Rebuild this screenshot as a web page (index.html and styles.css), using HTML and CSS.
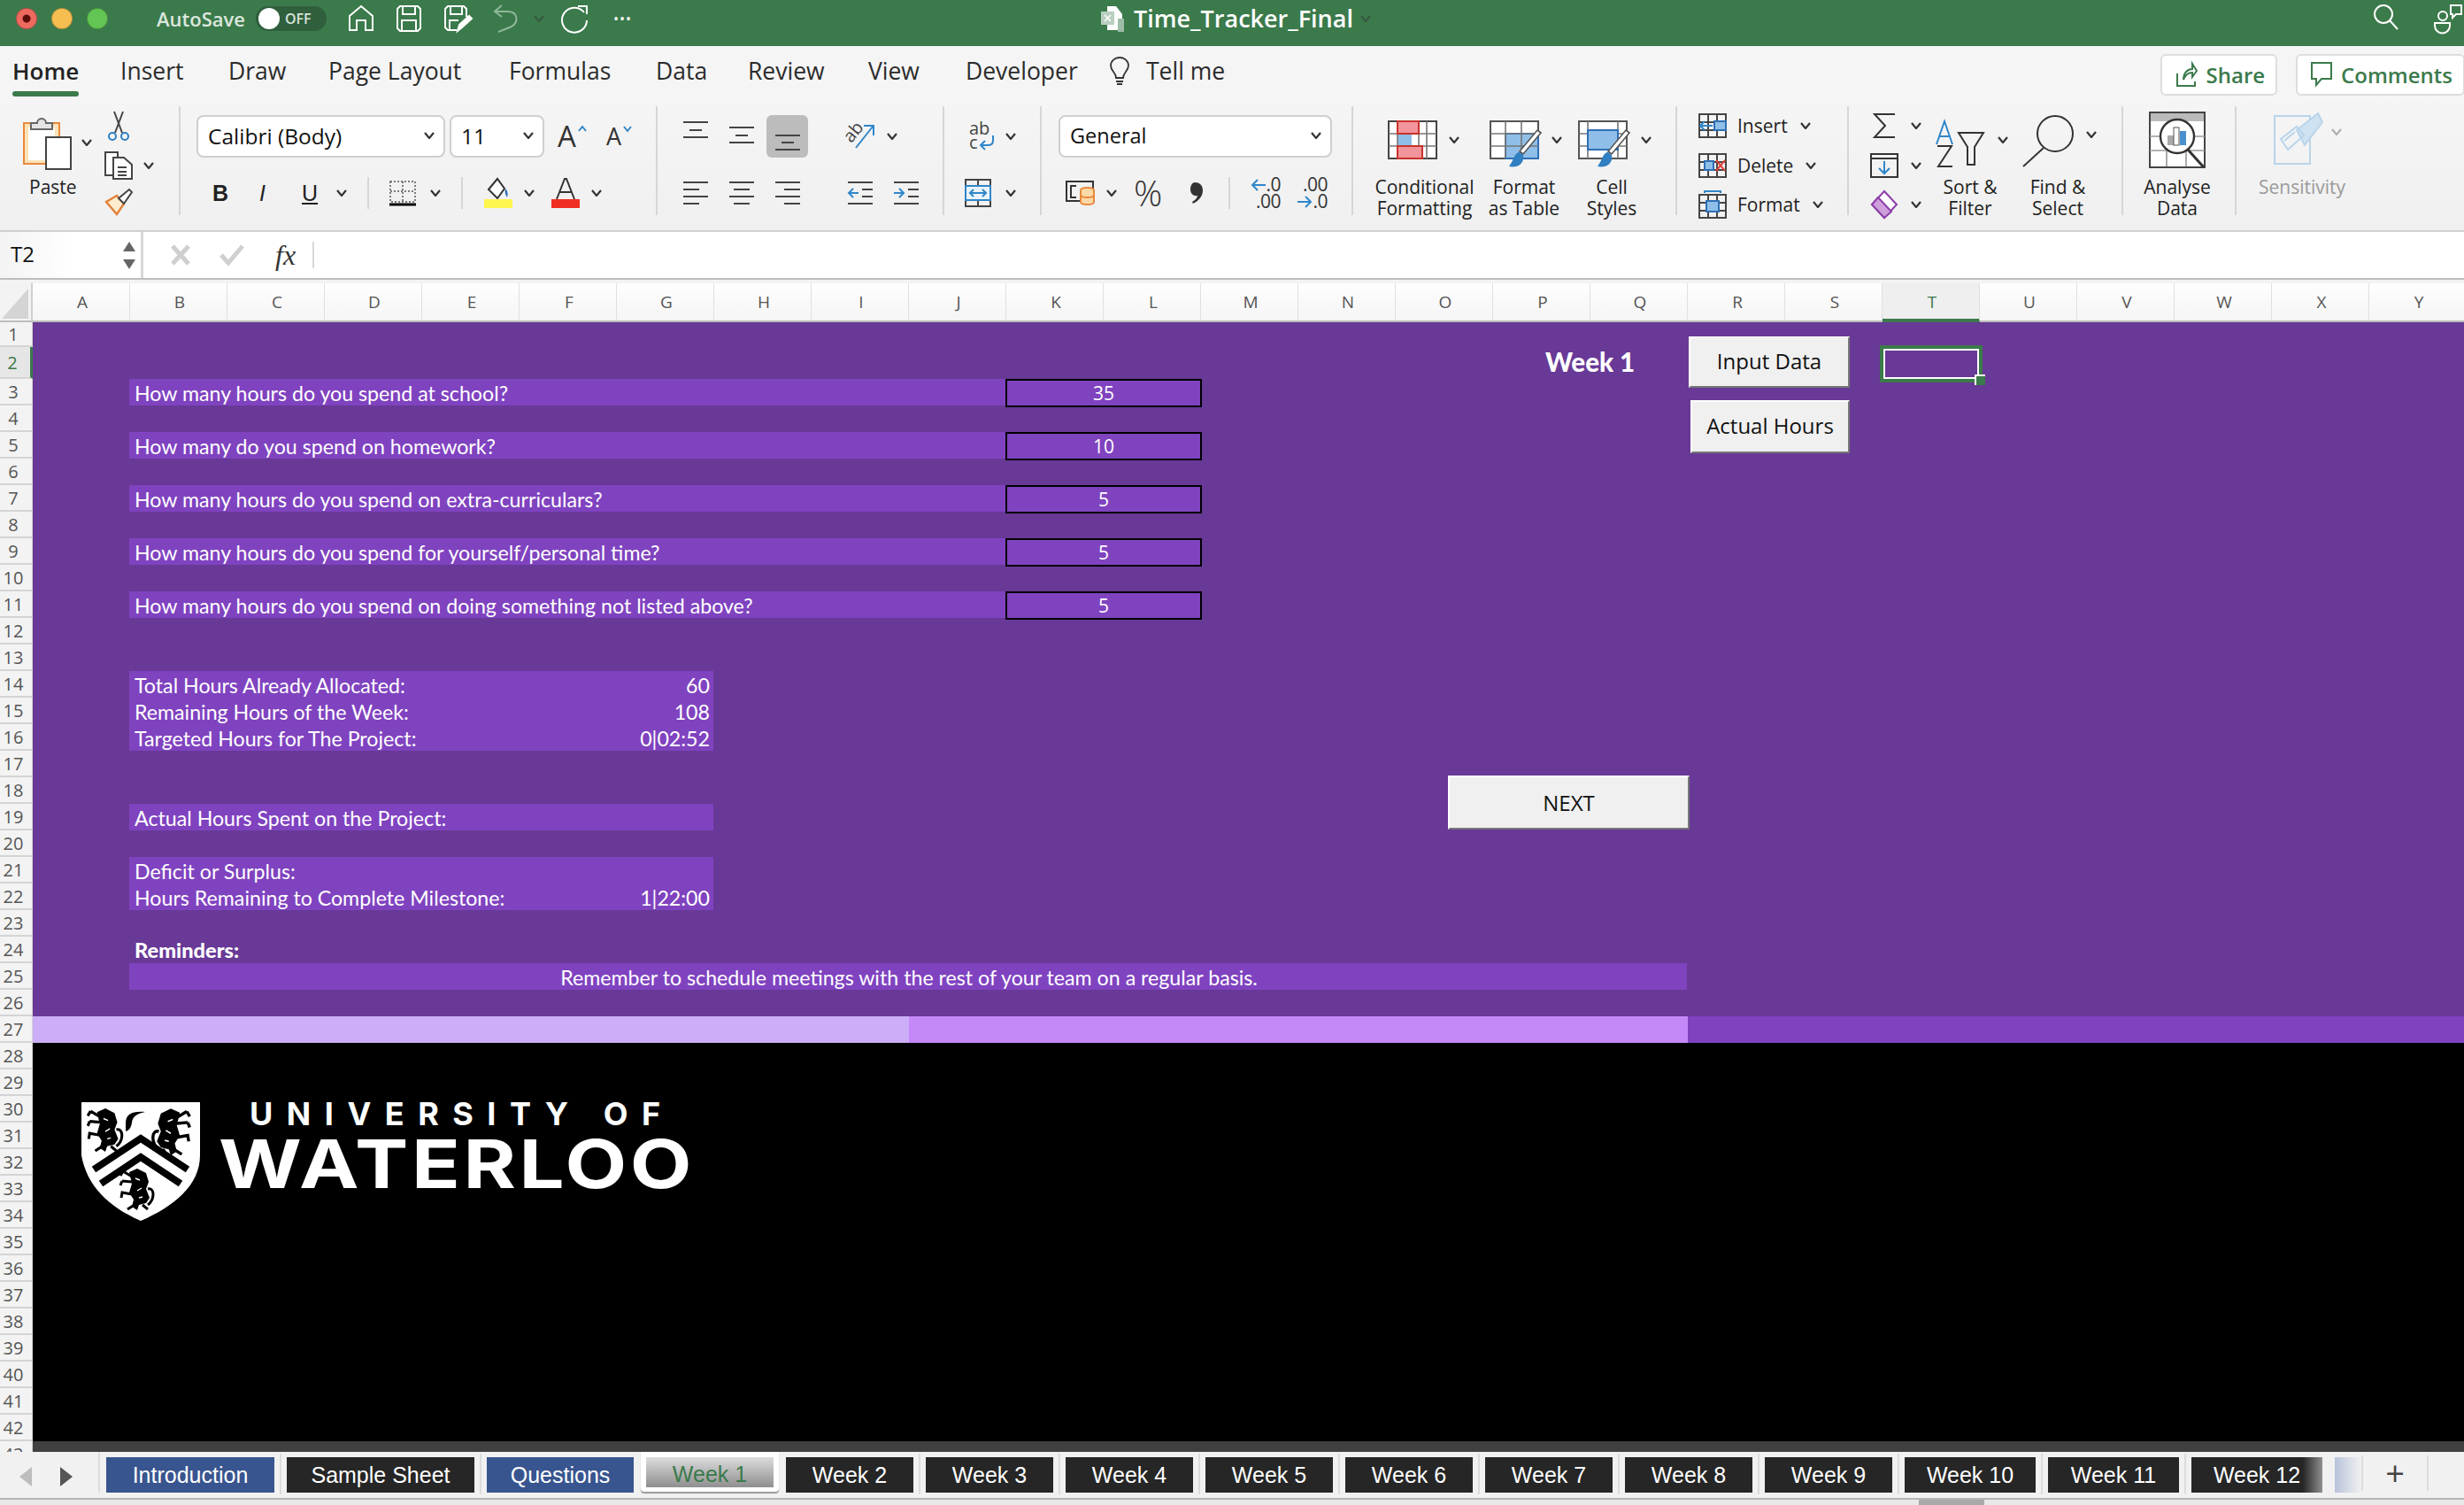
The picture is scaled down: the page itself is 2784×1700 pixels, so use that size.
FILE: index.html
```html
<!DOCTYPE html>
<html lang="en">
<head>
<meta charset="UTF-8">
<title>Time_Tracker_Final</title>
<link rel="stylesheet" href="styles.css">
</head>
<body>
<svg class="defs" width="0" height="0">
  <symbol id="chev" viewBox="0 0 12 8"><path d="M1 1l5 6 5-6" fill="none" stroke="#333" stroke-width="2.2"/></symbol>
  <symbol id="lion" viewBox="0 0 40 48">
    <path d="M11 5l9-4 10 5 3 10-3 8 4 10-4 6-8 2-2 6-6-4 2-8-5-8 3-10z" fill="#000"/>
    <path d="M14 10L4 4M4 4L1 9M14 16L3 15M3 15l-2 5M14 30L3 28l-1 6M20 40L9 47M26 42l6 5M32 24c8-2 8 12 0 18" fill="none" stroke="#000" stroke-width="3"/>
    <path d="M18 12l5 2M20 26l5-3M22 34l4-1" fill="none" stroke="#fff" stroke-width="1.4"/>
  </symbol>
</svg>

<header class="titlebar">
  <div class="lights"><i class="light red"></i><i class="light amber"></i><i class="light lime"></i></div>
  <span class="autosave">AutoSave</span>
  <span class="toggle"><i></i>OFF</span>
  <svg class="qa home" width="28" height="30" viewBox="0 0 28 30" fill="none" stroke="#fff" stroke-width="2"><path d="M1 28V12L14 1l13 11v16h-8V17H9v11z"/></svg>
  <svg class="qa save" width="28" height="30" viewBox="0 0 28 30" fill="none" stroke="#fff" stroke-width="2"><path d="M4 1h20l3 3v22l-3 3H4l-3-3V4z"/><path d="M7 1v9h14V1M6 29V17h16v12"/></svg>
  <svg class="qa saveas" width="32" height="30" viewBox="0 0 32 30" fill="none" stroke="#fff" stroke-width="2"><path d="M14 28H4l-3-3V4l3-3h18l3 3v9"/><path d="M7 1v9h13V1M6 28V17h10"/><path d="M15 29l2-7 11-10 3 3-11 10z" fill="#fff"/></svg>
  <svg class="qa undo" width="28" height="32" viewBox="0 0 28 32" fill="none" stroke="#8fb79b" stroke-width="2"><path d="M10 1L2 8l8 6M2 8h14c13 0 13 12 5 17L6 31"/></svg>
  <svg class="chev chev-undo"><use href="#chev"/></svg>
  <svg class="qa redo" width="32" height="32" viewBox="0 0 32 32" fill="none" stroke="#fff" stroke-width="2"><path d="M27 9a14 14 0 1 0 3 9"/><path d="M20 2h10v9"/></svg>
  <span class="dots">•••</span>
  <div class="doc-title">
    <svg width="30" height="30" viewBox="0 0 30 30"><path d="M8 1h10l7 9v18H8z" fill="#fff"/><rect x="1" y="7" width="15" height="15" fill="#b9cfc0"/><path d="M5 11l7 7M12 11l-7 7" stroke="#fff" stroke-width="1.6"/><rect x="20" y="15" width="7" height="15" fill="#9dbda8"/></svg>
    <span>Time_Tracker_Final</span>
    <svg class="chev"><use href="#chev"/></svg>
  </div>
  <div class="title-right">
    <svg width="30" height="30" viewBox="0 0 30 30" fill="none" stroke="#fff" stroke-width="2"><circle cx="12" cy="12" r="10"/><path d="M19 19l9 10"/></svg>
    <svg width="32" height="32" viewBox="0 0 32 32" fill="none" stroke="#fff" stroke-width="2"><circle cx="10" cy="14" r="5"/><path d="M1 22h17v3a8 8 0 0 1-17 0zM19 2h12v10h-6l-4 4v-4h-2z"/></svg>
  </div>
</header>

<nav class="ribbon-tabs">
  <div class="tab-list">
    <span class="rtab current">Home</span>
    <span class="rtab">Insert</span>
    <span class="rtab">Draw</span>
    <span class="rtab">Page Layout</span>
    <span class="rtab">Formulas</span>
    <span class="rtab">Data</span>
    <span class="rtab">Review</span>
    <span class="rtab">View</span>
    <span class="rtab">Developer</span>
    <svg width="24" height="32" viewBox="0 0 24 32" fill="none" stroke="#333" stroke-width="1.8"><path d="M8 24c0-6-6-8-6-14a10 9 0 0 1 20 0c0 6-6 8-6 14zM8 28h8M9 31h6"/></svg>
    <span class="rtab">Tell me</span>
  </div>
  <div class="share-box">
    <span class="action share"><svg width="24" height="28" viewBox="0 0 24 28" fill="none" stroke="#3b7a4b" stroke-width="2"><path d="M1 13v14h20v-5M8 20c0-8 5-12 10-12V2l5 8-5 7v-5c-5 0-8 3-10 8z"/></svg>Share</span>
    <span class="action comments"><svg width="24" height="28" viewBox="0 0 24 28" fill="none" stroke="#3b7a4b" stroke-width="2"><path d="M1 1h22v18H12l-6 7v-7H1z"/></svg>Comments</span>
  </div>
</nav>

<section class="ribbon">
  <!-- clipboard -->
  <div class="grp g-clip">
    <div class="paste">
      <div class="paste-top">
        <svg width="56" height="62" viewBox="0 0 56 62"><rect x="1" y="9" width="40" height="46" fill="#fbe3b8" stroke="#e8893c" stroke-width="2"/><rect x="6" y="14" width="30" height="37" fill="#fff"/><path d="M9 16V9h7a5 5 0 0 1 10 0h7v7z" fill="#e4e4e4" stroke="#666" stroke-width="2"/><rect x="26" y="25" width="28" height="36" fill="#fff" stroke="#444" stroke-width="2"/></svg>
        <svg class="chev"><use href="#chev"/></svg>
      </div>
      <span class="lbl paste-lbl">Paste</span>
    </div>
    <div class="clip-tools">
      <svg class="cut" width="32" height="34" viewBox="0 0 32 34" fill="none" stroke-width="2"><path d="M11 1l9 24M21 1l-9 24" stroke="#444"/><circle cx="9" cy="29" r="4" stroke="#2f7fc1"/><circle cx="23" cy="29" r="4" stroke="#2f7fc1"/></svg>
      <div class="copy-row">
        <svg width="32" height="32" viewBox="0 0 32 32" fill="#fff" stroke="#444" stroke-width="2"><path d="M1 1h14v26H1z"/><path d="M10 7h12l9 8v16H10zM15 18h10M15 23h10M15 27h10"/></svg>
        <svg class="chev"><use href="#chev"/></svg>
      </div>
      <svg class="brush" width="32" height="30" viewBox="0 0 32 30"><path d="M2 15l12-7 8 9-8 12z" fill="#fdeccd" stroke="#e0823a" stroke-width="2.4"/><path d="M16 11L28 1l3 3-9 13z" fill="#fff" stroke="#444" stroke-width="2"/></svg>
    </div>
  </div>

  <!-- font -->
  <div class="grp g-font">
    <div class="row1 font-r1">
      <div class="select font-name">Calibri (Body)<svg class="chev"><use href="#chev"/></svg></div>
      <div class="select font-size">11<svg class="chev"><use href="#chev"/></svg></div>
      <span class="grow-a">A<svg class="caret" width="10" height="7" viewBox="0 0 10 7" fill="none" stroke="#2f86c9" stroke-width="2"><path d="M1 6l4-5 4 5"/></svg></span>
      <span class="grow-a small-a">A<svg class="caret" width="10" height="7" viewBox="0 0 10 7" fill="none" stroke="#2f86c9" stroke-width="2"><path d="M1 1l4 5 4-5"/></svg></span>
    </div>
    <div class="row2 font-r2">
      <b class="fmt">B</b><i class="fmt thin">I</i><u class="fmt thin">U</u>
      <svg class="chev"><use href="#chev"/></svg>
      <span class="sep"></span>
      <svg width="30" height="30" viewBox="0 0 30 30" fill="none"><path d="M1 2h28v23H1zM15 2v23M1 13h28" stroke="#555" stroke-width="1.5" stroke-dasharray="2 2"/><path d="M0 28h30" stroke="#000" stroke-width="3"/></svg>
      <svg class="chev"><use href="#chev"/></svg>
      <span class="sep"></span>
      <svg width="32" height="34" viewBox="0 0 32 34"><path d="M5 13L15 1l8 11-8 11z" fill="#fff" stroke="#333" stroke-width="2"/><path d="M24 12c3 3 3 6 2 10-2-3-3-6-2-10z" fill="#2f6fb5"/><rect y="24" width="32" height="10" fill="#fdf550"/></svg>
      <svg class="chev"><use href="#chev"/></svg>
      <svg width="32" height="34" viewBox="0 0 32 34"><path d="M6 24L15 1h2l9 23M10 16h12" fill="none" stroke="#333" stroke-width="2"/><rect y="24" width="32" height="10" fill="#ee2f22"/></svg>
      <svg class="chev"><use href="#chev"/></svg>
    </div>
  </div>

  <!-- alignment -->
  <div class="grp g-align">
    <div class="row1 align-r1">
      <svg width="28" height="48" viewBox="0 0 28 48" stroke="#444" stroke-width="2"><path d="M0 8h28M7 17h14M0 25h28"/></svg>
      <svg width="28" height="48" viewBox="0 0 28 48" stroke="#444" stroke-width="2"><path d="M0 14h28M7 23h14M0 31h28"/></svg>
      <span class="active-btn"><svg width="28" height="48" viewBox="0 0 28 48" stroke="#444" stroke-width="2"><path d="M0 23h28M7 31h14M0 39h28"/></svg></span>
      <svg width="36" height="32" viewBox="0 0 36 32" fill="none"><text x="0" y="18" transform="rotate(-50 10 14)" class="ab-text">ab</text><path d="M12 29L31 5M21 4h11v11" stroke="#2f86c9" stroke-width="2"/></svg>
      <svg class="chev"><use href="#chev"/></svg>
    </div>
    <div class="row2 align-r2">
      <svg width="28" height="27" viewBox="0 0 28 27" stroke="#444" stroke-width="2"><path d="M0 1h28M0 9h18M0 17h28M0 25h18"/></svg>
      <svg width="28" height="27" viewBox="0 0 28 27" stroke="#444" stroke-width="2"><path d="M0 1h28M5 9h18M0 17h28M5 25h18"/></svg>
      <svg width="28" height="27" viewBox="0 0 28 27" stroke="#444" stroke-width="2"><path d="M0 1h28M10 9h18M0 17h28M10 25h18"/></svg>
      <svg width="28" height="27" viewBox="0 0 28 27" fill="none" stroke-width="2"><path d="M0 1h28M16 9h12M16 17h12M0 25h28" stroke="#444"/><path d="M12 13H1M6 8l-5 5 5 5" stroke="#2f86c9"/></svg>
      <svg width="28" height="27" viewBox="0 0 28 27" fill="none" stroke-width="2"><path d="M0 1h28M16 9h12M16 17h12M0 25h28" stroke="#444"/><path d="M0 13h11M6 8l5 5-5 5" stroke="#2f86c9"/></svg>
    </div>
  </div>

  <!-- wrap and merge -->
  <div class="grp g-wrap">
    <div class="row1 wrap-r1">
      <svg width="33" height="34" viewBox="0 0 33 34" fill="none"><text x="5" y="15" class="ab-text">ab</text><text x="5" y="31" class="ab-text">c</text><path d="M32 16v6c0 4-3 5-6 5h-8M23 22l-5 5 5 5" stroke="#2f86c9" stroke-width="2"/></svg>
      <svg class="chev"><use href="#chev"/></svg>
    </div>
    <div class="row2 wrap-r2">
      <svg width="30" height="32" viewBox="0 0 30 32" fill="none" stroke-width="2"><path d="M1 1h28v30H1zM15 1v7M15 24v7" stroke="#444"/><path d="M1 8h28v16H1z" stroke="#2f86c9" fill="#eaf3fb"/><path d="M6 16h18M10 12l-4 4 4 4M20 12l4 4-4 4" stroke="#2f86c9"/></svg>
      <svg class="chev"><use href="#chev"/></svg>
    </div>
  </div>

  <!-- number -->
  <div class="grp g-num">
    <div class="row1 num-r1">
      <div class="select num-format">General<svg class="chev"><use href="#chev"/></svg></div>
    </div>
    <div class="row2 num-r2">
      <svg width="34" height="28" viewBox="0 0 34 28" fill="none"><rect x="1" y="1" width="30" height="22" stroke="#333" stroke-width="2"/><path d="M12 6H6v13h6" stroke="#333" stroke-width="2"/><path d="M17 11v13c0 4 15 4 15 0V11c0-4-15-4-15 0z" fill="#fbd9a8" stroke="#e8893c" stroke-width="2"/><path d="M17 16c0 4 15 4 15 0" stroke="#e8893c" stroke-width="2"/></svg>
      <svg class="chev"><use href="#chev"/></svg>
      <span class="pct">%</span>
      <svg width="18" height="26" viewBox="0 0 18 26" fill="#333"><path d="M8 1c5 0 9 3 9 9 0 7-5 12-11 15l-1-2c4-2 6-5 6-7-4 1-8-2-8-7 0-4 2-8 5-8z"/></svg>
      <span class="sep"></span>
      <span class="dec"><span class="dec-line"><svg width="17" height="14" viewBox="0 0 17 14" fill="none" stroke="#2f86c9" stroke-width="2"><path d="M17 7H2M8 1L2 7l6 6"/></svg>.0</span><span class="dec-line">.00</span></span>
      <span class="dec"><span class="dec-line">.00</span><span class="dec-line"><svg width="17" height="14" viewBox="0 0 17 14" fill="none" stroke="#2f86c9" stroke-width="2"><path d="M0 7h15M9 1l6 6-6 6"/></svg>.0</span></span>
    </div>
  </div>

  <!-- styles -->
  <div class="grp g-styles">
    <div class="big big-cf">
      <div class="big-top">
        <svg width="56" height="44" viewBox="0 0 56 44"><path d="M1 1h54v42H1z" fill="#fff" stroke="#444" stroke-width="2"/><rect x="11" y="15" width="16" height="14" fill="#8fbfe8"/><path d="M1 15h54M1 29h54M44 1v42M11 1v42M35 1v42" stroke="#777" stroke-width="1.6" fill="none"/><rect x="11" y="1" width="24" height="14" fill="#f2949b" stroke="#c9332b" stroke-width="2"/><rect x="11" y="29" width="28" height="14" fill="#f2949b" stroke="#c9332b" stroke-width="2"/></svg>
        <svg class="chev big-chev"><use href="#chev"/></svg>
      </div>
      <span class="lbl">Conditional<br>Formatting</span>
    </div>
    <div class="big big-ft">
      <div class="big-top">
        <svg width="60" height="54" viewBox="0 0 60 54"><path d="M1 1h54v42H1z" fill="#fff" stroke="#555" stroke-width="2"/><rect x="18" y="15" width="37" height="28" fill="#8fbfe8" stroke="#2f6fb5" stroke-width="2"/><path d="M1 15h54M1 29h54M18 1v42M36 1v42" stroke="#777" stroke-width="1.6" fill="none"/><path d="M58 14L38 38l-4-3L54 11z" fill="#fff" stroke="#555" stroke-width="1.6"/><path d="M34 36c-6 0-6 8-12 16 8 2 18-2 16-13z" fill="#2f7fc1"/></svg>
        <svg class="chev big-chev"><use href="#chev"/></svg>
      </div>
      <span class="lbl">Format<br>as Table</span>
    </div>
    <div class="big big-cs">
      <div class="big-top">
        <svg width="60" height="54" viewBox="0 0 60 54"><path d="M1 1h54v42H1z" fill="#fff" stroke="#555" stroke-width="2"/><path d="M1 15h54M1 29h54M11 1v42M45 1v42" stroke="#777" stroke-width="1.6" fill="none"/><rect x="11" y="11" width="34" height="22" fill="#8fbfe8" stroke="#2f6fb5" stroke-width="2"/><path d="M58 14L38 38l-4-3L54 11z" fill="#fff" stroke="#555" stroke-width="1.6"/><path d="M34 36c-6 0-6 8-12 16 8 2 18-2 16-13z" fill="#2f7fc1"/></svg>
        <svg class="chev big-chev"><use href="#chev"/></svg>
      </div>
      <span class="lbl">Cell<br>Styles</span>
    </div>
  </div>

  <!-- cells -->
  <div class="grp g-cells">
    <div class="cell-row">
      <svg width="32" height="28" viewBox="0 0 32 28" fill="none" stroke-width="2"><path d="M1 1h30v26H1zM1 10h30M1 19h30M11 1v26M21 1v26" stroke="#444"/><rect x="18" y="9" width="13" height="10" fill="#8fbfe8" stroke="#2f6fb5"/><path d="M16 14H2M7 9l-5 5 5 5" stroke="#2f86c9"/></svg>
      <span class="lbl">Insert</span><svg class="chev"><use href="#chev"/></svg>
    </div>
    <div class="cell-row">
      <svg width="32" height="28" viewBox="0 0 32 28" fill="none" stroke-width="2"><path d="M1 1h30v26H1zM1 10h30M1 19h30M11 1v26M21 1v26" stroke="#444"/><rect x="7" y="9" width="10" height="10" fill="#8fbfe8" stroke="#2f6fb5"/><path d="M20 8l10 12M30 8L20 20" stroke="#e0443a"/></svg>
      <span class="lbl">Delete</span><svg class="chev"><use href="#chev"/></svg>
    </div>
    <div class="cell-row">
      <svg width="32" height="32" viewBox="0 0 32 32" fill="none" stroke-width="2"><path d="M1 5h30v26H1zM1 14h30M1 23h30M11 5v26M21 5v26" stroke="#444"/><rect x="9" y="12" width="14" height="12" fill="#8fbfe8" stroke="#2f6fb5"/><path d="M7 1h18M7 0v3M25 0v3" stroke="#2f86c9"/></svg>
      <span class="lbl">Format</span><svg class="chev"><use href="#chev"/></svg>
    </div>
  </div>

  <!-- editing -->
  <div class="grp g-edit">
    <div class="edit-col">
      <div class="cell-row">
        <svg width="32" height="28" viewBox="0 0 32 28" fill="none" stroke="#333" stroke-width="2"><path d="M28 1H5l12 13L5 27h23"/></svg>
        <svg class="chev"><use href="#chev"/></svg>
      </div>
      <div class="cell-row">
        <svg width="32" height="28" viewBox="0 0 32 28" fill="none" stroke-width="2"><path d="M1 1h30v26H1zM1 6h30" stroke="#333"/><path d="M16 9v14M10 17l6 6 6-6" stroke="#2f86c9"/></svg>
        <svg class="chev"><use href="#chev"/></svg>
      </div>
      <div class="cell-row">
        <svg width="32" height="32" viewBox="0 0 32 32"><path d="M16 1l14 15-14 15L2 16z" fill="#fff" stroke="#8c3fa8" stroke-width="2"/><path d="M2 16l7-8 15 16-8 7z" fill="#cf9fdc" stroke="#8c3fa8" stroke-width="2"/></svg>
        <svg class="chev"><use href="#chev"/></svg>
      </div>
    </div>
    <div class="big big-sort">
      <div class="big-top">
        <svg width="56" height="54" viewBox="0 0 56 54" fill="none" stroke-width="2"><path d="M1 27L10 1l9 26M4 18h12" stroke="#2f86c9"/><path d="M2 29h16L3 52h16" stroke="#333"/><path d="M26 14h28L44 30v20h-8V30z" stroke="#333"/></svg>
        <svg class="chev big-chev"><use href="#chev"/></svg>
      </div>
      <span class="lbl">Sort &amp;<br>Filter</span>
    </div>
    <div class="big big-find">
      <div class="big-top">
        <svg width="58" height="58" viewBox="0 0 58 58" fill="none" stroke="#333" stroke-width="2"><circle cx="37" cy="21" r="20"/><path d="M24 37L1 58"/></svg>
        <svg class="chev big-chev"><use href="#chev"/></svg>
      </div>
      <span class="lbl">Find &amp;<br>Select</span>
    </div>
  </div>

  <!-- analyse -->
  <div class="grp g-analyse">
    <svg width="64" height="64" viewBox="0 0 64 64" fill="none"><rect x="1" y="1" width="62" height="62" fill="#fff" stroke="#444" stroke-width="2"/><rect x="2" y="2" width="60" height="9" fill="#bbb"/><path d="M1 28h62M1 44h62M20 44v18M42 44v18" stroke="#999" stroke-width="1.6"/><circle cx="32" cy="28" r="19" fill="#fff" stroke="#333" stroke-width="2.4"/><rect x="21" y="27" width="7" height="11" fill="#aaa"/><rect x="28" y="18" width="6" height="20" fill="#fff" stroke="#555"/><rect x="35" y="22" width="7" height="16" fill="#4a90d0"/><path d="M44 43l18 20" stroke="#333" stroke-width="3"/></svg>
    <span class="lbl">Analyse<br>Data</span>
  </div>

  <!-- sensitivity -->
  <div class="grp g-sens">
    <div class="big-top">
      <svg width="56" height="60" viewBox="0 0 56 60" fill="none" stroke="#b9d4ea" stroke-width="2"><path d="M1 4h40v54H1z"/><path d="M26 20L50 1l5 10-20 26z" fill="#cfe2f2"/><path d="M8 30l18-14 8 10-18 16zM12 32l12-10" /></svg>
      <svg class="chev big-chev dim"><use href="#chev"/></svg>
    </div>
    <span class="lbl sens-lbl">Sensitivity</span>
  </div>
</section>

<div class="formula-bar">
  <div class="name-box"><span class="cell-ref">T2</span><span class="spin"><i class="up"></i><i class="down"></i></span></div>
  <div class="fx-tools">
    <svg width="22" height="24" viewBox="0 0 22 24" stroke="#cfcfcf" stroke-width="5"><path d="M2 2l18 20M20 2L2 22"/></svg>
    <svg width="28" height="24" viewBox="0 0 28 24" fill="none" stroke="#cfcfcf" stroke-width="5"><path d="M2 12l8 9L26 2"/></svg>
    <span class="fx">fx</span>
    <span class="fx-sep"></span>
  </div>
</div>

<div class="col-head">
  <div class="corner"><i></i></div>
  <span>A</span><span>B</span><span>C</span><span>D</span><span>E</span><span>F</span><span>G</span><span>H</span><span>I</span><span>J</span><span>K</span><span>L</span><span>M</span><span>N</span><span>O</span><span>P</span><span>Q</span><span>R</span><span>S</span><span class="on">T</span><span>U</span><span>V</span><span>W</span><span>X</span><span>Y</span>
</div>

<div class="workarea">
  <div class="row-head">
    <span class="h28">1</span><span class="h36 on">2</span>
    <span>3</span><span>4</span><span>5</span><span>6</span><span>7</span><span>8</span><span>9</span><span>10</span>
    <span>11</span><span>12</span><span>13</span><span>14</span><span>15</span><span>16</span><span>17</span><span>18</span><span>19</span><span>20</span>
    <span>21</span><span>22</span><span>23</span><span>24</span><span>25</span><span>26</span><span>27</span><span>28</span><span>29</span><span>30</span>
    <span>31</span><span>32</span><span>33</span><span>34</span><span>35</span><span>36</span><span>37</span><span>38</span><span>39</span><span>40</span>
    <span>41</span><span>42</span><span>43</span>
  </div>
  <div class="sheet-col">
    <div class="sheet">
      <div class="bar q r3">How many hours do you spend at school?</div>
      <div class="input r3">35</div>
      <div class="bar q r5">How many do you spend on homework?</div>
      <div class="input r5">10</div>
      <div class="bar q r7">How many hours do you spend on extra-curriculars?</div>
      <div class="input r7">5</div>
      <div class="bar q r9">How many hours do you spend for yourself/personal time?</div>
      <div class="input r9">5</div>
      <div class="bar q r11">How many hours do you spend on doing something not listed above?</div>
      <div class="input r11">5</div>

      <div class="bar sum r14"><span>Total Hours Already Allocated:</span><span>60</span></div>
      <div class="bar sum r15"><span>Remaining Hours of the Week:</span><span>108</span></div>
      <div class="bar sum r16"><span>Targeted Hours for The Project:</span><span>0|02:52</span></div>

      <div class="bar sum r19"><span>Actual Hours Spent on the Project:</span></div>
      <div class="bar sum r21"><span>Deficit or Surplus:</span></div>
      <div class="bar sum r22"><span>Hours Remaining to Complete Milestone:</span><span>1|22:00</span></div>

      <div class="reminders r24">Reminders:</div>
      <div class="bar note r25">Remember to schedule meetings with the rest of your team on a regular basis.</div>

      <div class="band band-a"></div>
      <div class="band band-b"></div>
      <div class="band band-c"></div>

      <div class="logo-area">
        <svg class="crest" width="134" height="134" viewBox="0 0 134 134">
          <path d="M0 0h134v60c0 34-30 58-67 74C30 118 6 94 0 60z" fill="#fff"/>
          <use href="#lion" x="6" y="6" width="42" height="50"/>
          <use href="#lion" x="78" y="6" width="46" height="54" transform="matrix(-1 0 0 1 202 0)"/>
          <use href="#lion" x="38" y="74" width="50" height="48"/>
          <path d="M50 24c0-10 6-14 22-13-8 2-14 4-15 12-1 7-4 9-7 10z" fill="#000"/>
          <path d="M14 76l53-35 53 35M22 92l45-30 45 30" fill="none" stroke="#000" stroke-width="8"/>
        </svg>
        <div class="wordmark">
          <span class="uni">UNIVERSITY OF</span>
          <span class="wat">WATERLOO</span>
        </div>
      </div>

      <div class="week-title">Week 1</div>
      <div class="selected"><i></i></div>
      <button class="sheet-btn btn-input">Input Data</button>
      <button class="sheet-btn btn-actual">Actual Hours</button>
      <button class="sheet-btn btn-next">NEXT</button>
    </div>
    <div class="hscroll"></div>
  </div>
</div>

<footer class="sheet-tabs">
  <div class="tab-arrows"><i class="prev"></i><i class="next"></i></div>
  <div class="tab-strip">
    <span class="stab blue t-intro">Introduction</span>
    <span class="stab dark t-sample">Sample Sheet</span>
    <span class="stab blue t-quest">Questions</span>
    <span class="stab active"><b>Week 1</b></span>
    <span class="stab dark">Week 2</span>
    <span class="stab dark">Week 3</span>
    <span class="stab dark">Week 4</span>
    <span class="stab dark">Week 5</span>
    <span class="stab dark">Week 6</span>
    <span class="stab dark">Week 7</span>
    <span class="stab dark">Week 8</span>
    <span class="stab dark">Week 9</span>
    <span class="stab dark wide">Week 10</span>
    <span class="stab dark wide">Week 11</span>
    <span class="stab dark wide fade">Week 12</span>
    <span class="stab sliver"></span>
    <span class="add-sheet">+</span>
  </div>
</footer>
<div class="bottom-strip"><i></i></div>
</body>
</html>
```

FILE: styles.css
```css
/* page */
* { box-sizing: border-box; }
html, body { margin: 0; padding: 0; }
body {
  width: 2784px;
  height: 1700px;
  overflow: hidden;
  background: #f3f3f3;
  color: #222;
  font-family: "Open Sans", "Liberation Sans", sans-serif;
}
.defs { position: absolute; }
svg { display: block; flex: none; overflow: visible; }
.chev { width: 12px; height: 8px; }
.chev.dim { opacity: .35; }

/* title bar */
.titlebar {
  position: relative;
  display: flex;
  align-items: center;
  height: 52px;
  padding-bottom: 10px;
  background: #3b7a4b;
  color: #fff;
}
.lights { display: flex; gap: 16px; margin-left: 18px; }
.light { width: 24px; height: 24px; border-radius: 50%; border: 1px solid rgba(0,0,0,.25); }
.red { background: radial-gradient(circle, #5b0d0a 0 4px, #ee6a5f 5px); }
.amber { background: #f6be50; }
.lime { background: #62c554; }
.autosave { margin-left: 55px; width: 112px; font-size: 22px; font-weight: 600; color: #dbe7de; }
.toggle {
  display: flex;
  align-items: center;
  gap: 6px;
  width: 80px;
  height: 28px;
  padding: 0 3px;
  border-radius: 14px;
  background: #2f5f3c;
  font-size: 16px;
  font-weight: 600;
  color: #d7e3da;
}
.toggle i { width: 24px; height: 24px; border-radius: 50%; background: #fff; }
.home { margin-left: 25px; }
.save { margin-left: 26px; }
.saveas { margin-left: 26px; }
.undo { margin-left: 23px; }
.chev-undo { margin-left: 18px; opacity: .45; }
.chev-undo + .redo { margin-left: 18px; }
.dots { margin-left: 28px; font-size: 16px; letter-spacing: 1px; }
.doc-title {
  position: absolute;
  left: 1243px;
  top: 6px;
  display: flex;
  align-items: center;
  gap: 8px;
  font-size: 27px;
  font-weight: 600;
  line-height: 30px;
}
.doc-title .chev { opacity: .45; }
.title-right {
  position: absolute;
  right: 2px;
  top: 4px;
  display: flex;
  gap: 39px;
}

/* ribbon tabs */
.ribbon-tabs {
  display: flex;
  align-items: center;
  justify-content: space-between;
  height: 58px;
  padding-left: 14px;
  background: #f5f5f5;
}
.tab-list {
  display: grid;
  grid-auto-flow: column;
  grid-template-columns: 122px 122px 113px 204px 166px 104px 136px 110px 162px 42px auto;
  align-items: center;
  justify-items: start;
  margin-top: -2px;
}
.rtab { position: relative; font-size: 26.5px; line-height: 40px; color: #2b2b2b; white-space: nowrap; }
.rtab.current { font-weight: 600; font-size: 26px; color: #222; }
.rtab.current::after {
  content: "";
  position: absolute;
  left: 0;
  right: 0;
  bottom: -9px;
  height: 6px;
  border-radius: 3px;
  background: #3b7a4b;
}
.share-box { display: flex; gap: 21px; margin-right: -1px; margin-top: 6px; }
.action {
  display: flex;
  align-items: center;
  gap: 10px;
  height: 47px;
  padding: 0 12px 0 16px;
  border: 2px solid #ddd;
  border-radius: 6px;
  background: #fff;
  font-size: 24px;
  font-weight: 600;
  color: #3b7a4b;
}
.action.comments { padding-left: 15px; }

/* ribbon */
.ribbon {
  display: flex;
  height: 152px;
  padding-top: 10px;
  border-bottom: 2px solid #d0d0d0;
  background: linear-gradient(#f5f5f5, #f0f0f0);
}
.grp {
  flex: none;
  height: 123px;
  border-right: 2px solid #d6d6d6;
}
.lbl { font-size: 21px; line-height: 24px; color: #222; }
.row1 { display: grid; grid-auto-flow: column; align-items: center; justify-items: start; height: 48px; margin-top: 10px; }
.row2 { display: grid; grid-auto-flow: column; align-items: center; justify-items: start; height: 44px; margin-top: 18px; }
.sep { width: 2px; height: 36px; background: #d6d6d6; }

.select {
  display: flex;
  align-items: center;
  justify-content: space-between;
  height: 48px;
  padding: 0 10px 2px 11px;
  border: 2px solid #cfcfcf;
  border-radius: 8px;
  background: #fff;
  font-size: 24.5px;
  color: #111;
}
.num-format { font-size: 23.5px; }

.g-clip { display: flex; width: 204px; padding-left: 26px; }
.paste { width: 92px; padding-top: 10px; }
.paste-top { display: flex; align-items: center; gap: 10px; height: 62px; }
.paste-lbl { display: block; margin-top: 7px; padding-left: 7px; }
.clip-tools { display: flex; flex-direction: column; gap: 12px; padding-top: 5px; }
.copy-row { display: flex; align-items: center; gap: 12px; }
.brush { margin-top: -2px; }

.g-font { width: 539px; }
.font-r1 { grid-template-columns: 286px 122px 55px auto; padding-left: 18px; }
.font-name { width: 281px; }
.font-size { width: 107px; }
.grow-a { display: flex; align-items: flex-start; font-size: 33px; line-height: 40px; color: #333; }
.caret { margin: 8px 0 0 2px; }
.small-a { font-size: 27px; }
.font-r2 { grid-template-columns: 53px 48px 39px 35px 25px 46px 35px 26px 45px 31px 45px 12px; padding-left: 36px; }
.fmt { font-family: "Liberation Sans", sans-serif; font-size: 25px; }
.fmt.thin { font-weight: 400; }

.g-align { width: 324px; }
.align-r1 { grid-template-columns: 52px 42px 89px 47px 12px; padding-left: 29px; }
.active-btn { display: block; width: 47px; height: 48px; padding-left: 10px; border-radius: 6px; background: #bcbcbc; }
.align-r2 { grid-template-columns: 52px 52px 82px 52px 28px; padding-left: 29px; }
.ab-text { font-family: "Open Sans", sans-serif; font-size: 20px; fill: #444; }

.g-wrap { width: 110px; }
.wrap-r1 { grid-template-columns: 46px 12px; padding-left: 23px; }
.wrap-r2 { grid-template-columns: 46px 12px; padding-left: 23px; }

.g-num { width: 352px; }
.num-r1 { padding-left: 19px; }
.num-format { width: 309px; }
.num-r2 { grid-template-columns: 46px 31px 61px 46px 25px 53px 34px; padding-left: 27px; }
.pct { font-size: 40px; font-weight: 300; line-height: 40px; color: #333; }
.dec { display: flex; flex-direction: column; align-items: flex-end; width: 34px; font-size: 21px; line-height: 19px; letter-spacing: -.5px; color: #333; }
.dec-line { display: flex; align-items: center; }

.g-styles { display: flex; width: 366px; padding-left: 22px; }
.big { flex: none; }
.big .lbl { display: block; text-align: center; }
.big-top { display: flex; align-items: flex-start; height: 79px; padding-top: 16px; }
.big-chev { margin-top: 18px; }
.big-cf { width: 117px; }
.big-cf .big-top { padding-left: 17px; gap: 13px; }
.big-ft { width: 108px; }
.big-ft .big-top { padding-left: 15px; gap: 10px; }
.big-cs { width: 90px; }
.big-cs .big-top { padding-left: 7px; gap: 11px; }

.g-cells { width: 194px; padding-left: 24px; }
.cell-row { display: flex; align-items: center; gap: 12px; height: 44.5px; }
.cell-row .chev { margin-left: 2px; }

.g-edit { display: flex; width: 310px; padding-left: 24px; }
.edit-col { width: 62px; }
.big-sort { width: 102px; }
.big-sort .big-top { padding-left: 12px; gap: 14px; }
.big-find { width: 96px; }
.big-find .big-top { padding: 10px 0 0 8px; gap: 14px; }

.g-analyse { display: flex; flex-direction: column; align-items: center; width: 128px; padding: 6px 4px 0 0; }
.g-analyse .lbl { margin-top: 9px; text-align: center; }

.g-sens { width: 148px; border-right: 0; }
.g-sens .big-top { padding: 7px 0 0 42px; gap: 9px; }
.sens-lbl { display: block; text-align: center; color: #9a9a9a; }

/* formula bar */
.formula-bar {
  display: flex;
  align-items: center;
  height: 52px;
  background: #fff;
}
.name-box {
  display: flex;
  align-items: center;
  justify-content: space-between;
  width: 162px;
  height: 52px;
  padding: 0 6px 0 12px;
  border-right: 3px solid #d8d8d8;
  background: linear-gradient(90deg, #f3f3f3, #fff 50%);
  font-size: 24px;
  color: #111;
}
.cell-ref { margin-top: -3px; }
.spin { display: flex; flex-direction: column; gap: 9px; }
.spin i { display: block; width: 0; height: 0; border-left: 7px solid transparent; border-right: 7px solid transparent; }
.spin .up { border-bottom: 11px solid #666; }
.spin .down { border-top: 11px solid #666; }
.fx-tools { display: grid; grid-auto-flow: column; grid-template-columns: 55px 60px 45px 2px; align-items: center; margin-left: 31px; }
.fx { padding-left: 3px; font-family: "Liberation Serif", serif; font-size: 32px; font-style: italic; line-height: 40px; color: #333; }
.fx-sep { height: 30px; background: #d8d8d8; }

/* column header */
.col-head {
  display: flex;
  height: 50px;
  padding-top: 4px;
  border-top: 2px solid #bdbdbd;
  border-bottom: 2px solid #bdbdbd;
  background: linear-gradient(#fff, #f5f5f5);
  background-clip: content-box;
}
.corner { position: relative; flex: none; width: 37px; border-right: 2px solid #cfcfcf; background: #f3f3f3; }
.corner i {
  position: absolute;
  right: 3px;
  bottom: 2px;
  border-left: 30px solid transparent;
  border-bottom: 34px solid #d4d4d4;
}
.col-head span {
  flex: none;
  width: 110px;
  padding-left: 3px;
  border-right: 1px solid #e0e0e0;
  font-size: 19px;
  line-height: 42px;
  text-align: center;
  color: #555;
}
.col-head .on { border-bottom: 4px solid #3b7a4b; background: #efefef; color: #3b7a4b; margin-bottom: -2px; }

/* sheet */
.workarea { display: flex; height: 1276px; }
.row-head { flex: none; width: 37px; height: 1276px; overflow: hidden; background: #f3f3f3; }
.row-head span {
  display: block;
  height: 30px;
  padding-right: 6px;
  border-bottom: 2px solid #d4d4d4;
  border-right: 1px solid #d4d4d4;
  font-size: 20px;
  line-height: 30px;
  text-align: center;
  color: #555;
}
.row-head .h28 { height: 28px; line-height: 28px; }
.row-head .h36 { height: 36px; line-height: 36px; }
.row-head .on { border-right: 3px solid #3b7a4b; background: #e6e6e6; color: #3b7a4b; }

.sheet-col { flex: none; width: 2747px; }
.sheet {
  position: relative;
  display: grid;
  grid-template-columns: repeat(26, 110px);
  grid-template-rows: 28px 36px repeat(41, 30px);
  height: 1264px;
  overflow: hidden;
  background: #683996;
  color: #fff;
  font-family: Lato, "Liberation Sans", sans-serif;
  font-size: 23.2px;
}
.hscroll { height: 12px; background: #404040; }

.bar { display: flex; align-items: center; margin-left: -1px; padding: 1px 4px 0 6px; background: #8043c0; white-space: nowrap; }
.q { grid-column: 2 / 11; }
.sum { grid-column: 2 / 8; justify-content: space-between; margin-right: 1px; }
.note { grid-column: 2 / 18; justify-content: center; margin-right: 1px; }
.input {
  grid-column: 11 / 13;
  display: flex;
  align-items: center;
  justify-content: center;
  height: 32px;
  margin: 0 -1px;
  border: 2px solid #000;
  background: #8043c0;
  font-family: "Open Sans", sans-serif;
  font-size: 21px;
}
.r3 { grid-row: 3; } .r5 { grid-row: 5; } .r7 { grid-row: 7; } .r9 { grid-row: 9; } .r11 { grid-row: 11; }
.r14 { grid-row: 14; } .r15 { grid-row: 15; } .r16 { grid-row: 16; } .r19 { grid-row: 19; }
.r21 { grid-row: 21; } .r22 { grid-row: 22; } .r24 { grid-row: 24; } .r25 { grid-row: 25; }

.reminders { grid-column: 2 / 6; padding-left: 5px; font-size: 23.6px; font-weight: 900; line-height: 30px; white-space: nowrap; }

.band { grid-row: 27; }
.band-a { grid-column: 1 / 10; background: #ccaef6; }
.band-b { grid-column: 10 / 18; background: #c488f8; }
.band-c { grid-column: 18 / 27; background: #8043c0; }

.logo-area {
  grid-column: 1 / 27;
  grid-row: 28 / 44;
  display: flex;
  align-items: flex-start;
  padding: 67px 0 0 55px;
  background: #000;
}
.wordmark { display: flex; flex-direction: column; margin-left: 21px; color: #fff; font-family: Inter, "Liberation Sans", sans-serif; white-space: nowrap; }
.uni { margin-left: 35px; font-size: 36px; font-weight: 700; line-height: 26px; letter-spacing: 15.5px; }
.wat { margin-top: 16px; font-size: 76px; font-weight: 700; line-height: 55px; letter-spacing: 3px; transform: scaleX(1.19); transform-origin: left; }

/* things floating over the cells */
.week-title { position: absolute; left: 1709px; top: 27px; font-size: 29.5px; font-weight: 900; line-height: 36px; }
.selected {
  position: absolute;
  left: 2087px;
  top: 26px;
  width: 116px;
  height: 42px;
  border: 4px solid #3b7a4b;
  box-shadow: inset 0 0 0 2px #fff;
}
.selected i {
  position: absolute;
  right: -7px;
  bottom: -7px;
  width: 12px;
  height: 12px;
  border: 2px solid #fff;
  border-width: 2px 0 0 2px;
  background: #3b7a4b;
}
.sheet-btn {
  position: absolute;
  padding: 0;
  border: 2px solid;
  border-color: #fff #777 #777 #fff;
  background: #f0f0f0;
  font-family: "Open Sans", sans-serif;
  font-size: 24px;
  color: #111;
}
.btn-input { left: 1871px; top: 16px; width: 182px; height: 58px; padding-bottom: 4px; }
.btn-actual { left: 1873px; top: 88px; width: 180px; height: 60px; padding-bottom: 4px; }
.btn-next { left: 1599px; top: 512px; width: 273px; height: 61px; }

/* sheet tabs */
.sheet-tabs {
  display: flex;
  height: 52px;
  background: #f1f1f1;
}
.tab-arrows { flex: none; display: flex; gap: 32px; width: 113px; padding: 17px 0 0 22px; border-right: 2px solid #dcdcdc; margin-bottom: 6px; }
.tab-arrows i { display: block; width: 0; height: 0; border-top: 11px solid transparent; border-bottom: 11px solid transparent; }
.tab-arrows .prev { border-right: 14px solid #bdbdbd; }
.tab-arrows .next { border-left: 14px solid #555; }
.tab-strip { display: flex; align-items: flex-start; gap: 14px; padding: 6px 0 0 7px; }
.stab {
  position: relative;
  display: flex;
  align-items: center;
  justify-content: center;
  flex: none;
  width: 144px;
  height: 40px;
  font-family: "Liberation Sans", sans-serif;
  font-size: 25px;
  color: #fff;
  white-space: nowrap;
}
.stab::before {
  content: "";
  position: absolute;
  left: -8px;
  top: -4px;
  bottom: -2px;
  width: 2px;
  background: #dcdcdc;
}
.t-intro::before, .active::before, .active + .stab::before { display: none; }
.t-intro { width: 190px; }
.t-sample { width: 212px; }
.t-quest { width: 166px; }
.wide { width: 148px; }
.blue { background: #38558f; }
.dark { background: #262626; }
.stab.active {
  width: 156px;
  height: 45px;
  margin: -6px -6px 0;
  padding: 6px 6px 5px;
  border-radius: 0 0 4px 4px;
  background: #fff;
  box-shadow: 0 2px 1px #999;
}
.stab.active b {
  display: block;
  width: 100%;
  height: 34px;
  padding-top: 3px;
  background: linear-gradient(#dcdcdc, #8f8f8f);
  font-weight: 400;
  line-height: 32px;
  text-align: center;
  color: #3b7a4b;
}
.fade { background: linear-gradient(90deg, #262626 85%, #8f8f8f); }
.sliver { width: 30px; background: linear-gradient(90deg, #b8c3da, #f1f1f1); }
.sliver::before { display: none; }
.add-sheet {
  width: 76px;
  height: 40px;
  margin: -2px 0 0 -14px;
  border: solid #dcdcdc;
  border-width: 0 2px;
  font-size: 38px;
  line-height: 38px;
  text-align: center;
  color: #444;
}

.bottom-strip {
  height: 8px;
  padding-left: 2168px;
  border-top: 2px solid #b5b5b5;
  background: #e8e8e8;
}
.bottom-strip i { display: block; width: 74px; height: 6px; background: #a9a9a9; }
```
